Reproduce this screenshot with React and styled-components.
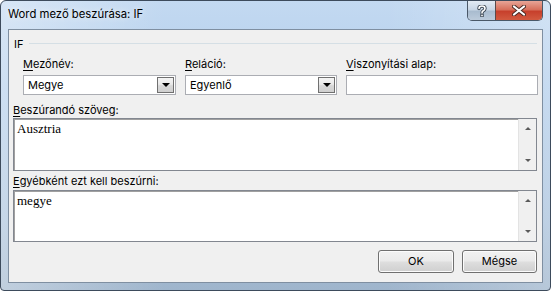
import React from "react";
import styled, { createGlobalStyle } from "styled-components";

const Global = createGlobalStyle`
  html, body { margin: 0; padding: 0; background: #ffffff; }
  #root { width: 551px; height: 291px; }
`;

const UI_FONT = `"Inter", "Liberation Sans", Arial, sans-serif`;

const Window = styled.div`
  box-sizing: border-box;
  width: 551px;
  height: 291px;
  display: flex;
  flex-direction: column;
  border: 1px solid #3d4b5c;
  border-radius: 6px 6px 4px 4px;
  overflow: hidden;
  background:
    linear-gradient(90deg, rgba(255,255,255,0.35) 0%, rgba(255,255,255,0) 30%, rgba(255,255,255,0) 70%, rgba(255,255,255,0.25) 100%),
    linear-gradient(180deg, #c3d9f1 0%, #b4cfec 30%, #a9c2dc 75%, #9fb5cc 100%);
  font-family: ${UI_FONT};
  font-size: 11px;
  color: #000;
`;

const TitleBar = styled.div`
  height: 28px;
  display: flex;
  align-items: flex-start;
  padding: 0 7px 0 7px;
  flex-shrink: 0;
`;

const TitleText = styled.div`
  margin-top: 6px;
  font-size: 11.3px;
  line-height: 15px;
  color: #000;
  text-shadow: 0 0 6px rgba(255,255,255,0.9);
  flex: 1;
`;

const CaptionGroup = styled.div`
  display: flex;
  height: 19px;
  border: 1px solid #4a5868;
  border-top: none;
  border-radius: 0 0 5px 5px;
  overflow: hidden;
`;

const CaptionButton = styled.div`
  width: ${(p) => p.$w}px;
  height: 19px;
  display: flex;
  align-items: center;
  justify-content: center;
  background: ${(p) =>
    p.$close
      ? "linear-gradient(180deg, #e8a597 0%, #d7705c 45%, #c7402c 55%, #d25a40 100%)"
      : "linear-gradient(180deg, #e3ebf4 0%, #c8d6e5 45%, #a9bccf 55%, #bccbdb 100%)"};
  border-left: ${(p) => (p.$close ? "1px solid #5a4a4a" : "none")};
`;

const Client = styled.div`
  flex: 1;
  margin: 0 7px 7px 7px;
  border: 1px solid #7f8fa1;
  background: #f0f0f0;
  padding: 6px 5px 9px 4px;
  display: flex;
  flex-direction: column;
`;

const GroupHeader = styled.div`
  display: flex;
  align-items: center;
  height: 15px;
  padding-left: 1px;
  gap: 6px;
`;

const HeaderRule = styled.div`
  flex: 1;
  height: 1px;
  background: #d5dfe5;
`;

const FieldsRow = styled.div`
  display: grid;
  grid-template-columns: 153px 152px 192px;
  column-gap: 9px;
  padding-left: 10px;
  margin-top: 6px;
`;

const Field = styled.div`
  display: flex;
  flex-direction: column;
`;

const Label = styled.div`
  line-height: 15px;
  height: 15px;
  white-space: nowrap;
  margin-bottom: ${(p) => p.$gap ?? 3}px;
  margin-top: ${(p) => p.$top ?? 0}px;
`;

const Key = styled.span`
  text-decoration: underline;
  text-underline-offset: 2px;
`;

const Combo = styled.div`
  box-sizing: border-box;
  height: 20px;
  background: #fff;
  border: 1px solid #abadb3;
  display: flex;
  align-items: stretch;
  padding: 1px;
`;

const ComboText = styled.div`
  flex: 1;
  padding-left: 3px;
  line-height: 16px;
`;

const DropButton = styled.div`
  box-sizing: border-box;
  width: 17px;
  border: 1px solid #707070;
  background: linear-gradient(180deg, #f4f4f4 0%, #e9e9e9 45%, #d8d8d8 55%, #cfcfcf 100%);
  display: flex;
  align-items: center;
  justify-content: center;
`;

const EditBox = styled.div`
  box-sizing: border-box;
  height: 20px;
  background: #fff;
  border: 1px solid #abadb3;
`;

const TextArea = styled.div`
  box-sizing: border-box;
  height: ${(p) => p.$h}px;
  background: #fff;
  border: 1px solid #828790;
  box-shadow: inset 1px 1px 0 #a0a0a0;
  display: flex;
`;

const AreaText = styled.div`
  flex: 1;
  padding: 2px 3px;
  font-family: "Liberation Serif", "Times New Roman", serif;
  font-size: 13px;
  line-height: 15px;
  color: #000;
`;

const Scroll = styled.div`
  width: 17px;
  background: #f0f0f0;
  border-left: 1px solid #e3e3e3;
  display: flex;
  flex-direction: column;
  justify-content: space-between;
  align-items: center;
  padding: 8px 0 8px;
`;

const Arrow = styled.div`
  width: 0;
  height: 0;
  border-left: ${(p) => (p.$big ? 4 : 3)}px solid transparent;
  border-right: ${(p) => (p.$big ? 4 : 3)}px solid transparent;
  ${(p) =>
    p.$up
      ? `border-bottom: 3px solid #5a5a5a;`
      : `border-top: ${p.$big ? 4 : 3}px solid ${p.$big ? "#000" : "#5a5a5a"};`}
`;

const ButtonRow = styled.div`
  margin-top: auto;
  display: flex;
  justify-content: flex-end;
  gap: 8px;
`;

const Button = styled.div`
  box-sizing: border-box;
  width: ${(p) => p.$w}px;
  height: 23px;
  border: 1px solid #707070;
  border-radius: 3px;
  background: linear-gradient(180deg, #f2f2f2 0%, #ebebeb 45%, #dddddd 55%, #cfcfcf 100%);
  box-shadow: inset 0 0 0 1px #fcfcfc;
  display: flex;
  align-items: center;
  justify-content: center;
  line-height: 15px;
`;

function Scrollbar() {
  return (
    <Scroll>
      <Arrow $up />
      <Arrow />
    </Scroll>
  );
}

export default function App() {
  return (
    <>
      <Global />
      <Window>
        <TitleBar>
          <TitleText>Word mező beszúrása: IF</TitleText>
          <CaptionGroup>
            <CaptionButton $w={27}>
              <svg width="10" height="12" viewBox="0 0 10 12">
                <path
                  d="M2 3.5 Q2 1 5 1 Q8 1 8 3.5 Q8 5 6 6 Q5 6.6 5 8"
                  fill="none"
                  stroke="#3b4652"
                  strokeWidth="3.4"
                  strokeLinecap="round"
                />
                <rect x="3.3" y="9" width="3.4" height="3" fill="#3b4652" />
                <path
                  d="M2 3.5 Q2 1 5 1 Q8 1 8 3.5 Q8 5 6 6 Q5 6.6 5 8"
                  fill="none"
                  stroke="#ffffff"
                  strokeWidth="1.6"
                  strokeLinecap="round"
                />
                <rect x="4.2" y="9.7" width="1.6" height="1.6" fill="#ffffff" />
              </svg>
            </CaptionButton>
            <CaptionButton $w={46} $close>
              <svg width="14" height="11" viewBox="0 0 14 11">
                <path d="M2 1.5 L12 9.5 M12 1.5 L2 9.5" stroke="#4a2a24" strokeWidth="4" strokeLinecap="round" />
                <path d="M2 1.5 L12 9.5 M12 1.5 L2 9.5" stroke="#ffffff" strokeWidth="2.2" strokeLinecap="round" />
              </svg>
            </CaptionButton>
          </CaptionGroup>
        </TitleBar>

        <Client>
          <GroupHeader>
            <span>IF</span>
            <HeaderRule />
          </GroupHeader>

          <FieldsRow>
            <Field>
              <Label>
                <Key>M</Key>ezőnév:
              </Label>
              <Combo>
                <ComboText>Megye</ComboText>
                <DropButton>
                  <Arrow $big />
                </DropButton>
              </Combo>
            </Field>
            <Field>
              <Label>
                <Key>R</Key>eláció:
              </Label>
              <Combo>
                <ComboText>Egyenlő</ComboText>
                <DropButton>
                  <Arrow $big />
                </DropButton>
              </Combo>
            </Field>
            <Field>
              <Label>
                <Key>V</Key>iszonyítási alap:
              </Label>
              <EditBox />
            </Field>
          </FieldsRow>

          <Label $top={8} $gap={0}>
            <Key>B</Key>eszúrandó szöveg:
          </Label>
          <TextArea $h={53}>
            <AreaText>Ausztria</AreaText>
            <Scrollbar />
          </TextArea>

          <Label $top={3} $gap={1}>
            <Key>E</Key>gyébként ezt kell beszúrni:
          </Label>
          <TextArea $h={52}>
            <AreaText>megye</AreaText>
            <Scrollbar />
          </TextArea>

          <ButtonRow>
            <Button $w={76}>OK</Button>
            <Button $w={75}>Mégse</Button>
          </ButtonRow>
        </Client>
      </Window>
    </>
  );
}
